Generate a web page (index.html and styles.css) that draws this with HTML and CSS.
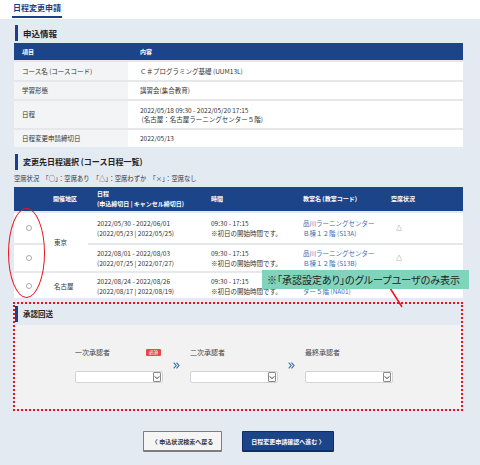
FILE: index.html
```html
<!DOCTYPE html>
<html lang="ja">
<head>
<meta charset="utf-8">
<title>日程変更申請</title>
<link rel="stylesheet" href="styles.css">
</head>
<body>
<div class="tabbar"><span class="tab">日程変更申請</span></div>
<div class="main">
  <h2 class="sec">申込情報</h2>
  <div class="info">
    <div class="irow ihead"><div class="lbl">項目</div><div class="val">内容</div></div>
    <div class="irow h20"><div class="lbl">コース名 (コースコード)</div><div class="val">Ｃ＃プログラミング基礎 (UUM13L)</div></div>
    <div class="irow h19"><div class="lbl">学習形態</div><div class="val">講習会(集合教育)</div></div>
    <div class="irow h28"><div class="lbl">日程</div><div class="val">2022/05/18 09:30 - 2022/05/20 17:15<br>&nbsp;(名古屋：名古屋ラーニングセンター５階)</div></div>
    <div class="irow h19"><div class="lbl">日程変更申請締切日</div><div class="val">2022/05/13</div></div>
  </div>

  <h2 class="sec sec2">変更先日程選択 (コース日程一覧)</h2>
  <p class="legend">空席状況　「○」：空席あり　「△」：空席わずか　「×」：空席なし</p>
  <div class="sched">
    <div class="th"></div>
    <div class="th">開催地区</div>
    <div class="th">日程<br>(申込締切日 | キャンセル締切日)</div>
    <div class="th">時間</div>
    <div class="th">教室名 (教室コード)</div>
    <div class="th">空席状況</div>

    <div class="td rad"><span class="radio"></span></div>
    <div class="td area span2">東京</div>
    <div class="td">2022/05/30 - 2022/06/01<br>(2022/05/23 | 2022/05/25)</div>
    <div class="td">09:30 - 17:15<br>※初日の開始時間です。</div>
    <div class="td link">品川ラーニングセンター<br>Ｂ棟１２階 (S13A)</div>
    <div class="td st">△</div>

    <div class="td rad"><span class="radio"></span></div>
    <div class="td">2022/08/01 - 2022/08/03<br>(2022/07/25 | 2022/07/27)</div>
    <div class="td">09:30 - 17:15<br>※初日の開始時間です。</div>
    <div class="td link">品川ラーニングセンター<br>Ｂ棟１２階 (S13B)</div>
    <div class="td st">△</div>

    <div class="td rad"><span class="radio"></span></div>
    <div class="td area">名古屋</div>
    <div class="td">2022/08/24 - 2022/08/26<br>(2022/08/17 | 2022/08/19)</div>
    <div class="td">09:30 - 17:15<br>※初日の開始時間です。</div>
    <div class="td link">名古屋ラーニングセン<br>ター５階 (NA01)</div>
    <div class="td st">○</div>
  </div>

  <div class="approval">
    <div class="ap-head"><span class="ap-title">承認回送</span></div>
    <div class="ap-body">
      <div class="ap-col">
        <div class="ap-label">一次承認者<span class="req">必須</span></div>
        <div class="sel"><i><svg viewBox="0 0 8 6" width="6" height="5"><path d="M1 1.5 L4 4.5 L7 1.5" fill="none" stroke="#333" stroke-width="1.3"/></svg></i></div>
      </div>
      <div class="arrow"><svg viewBox="0 0 8 8" width="7" height="7"><path d="M0.8 0.8 L3.6 4 L0.8 7.2 M4 0.8 L6.8 4 L4 7.2" fill="none" stroke="#3a6db3" stroke-width="1.3"/></svg></div>
      <div class="ap-col">
        <div class="ap-label">二次承認者</div>
        <div class="sel"><i><svg viewBox="0 0 8 6" width="6" height="5"><path d="M1 1.5 L4 4.5 L7 1.5" fill="none" stroke="#333" stroke-width="1.3"/></svg></i></div>
      </div>
      <div class="arrow"><svg viewBox="0 0 8 8" width="7" height="7"><path d="M0.8 0.8 L3.6 4 L0.8 7.2 M4 0.8 L6.8 4 L4 7.2" fill="none" stroke="#3a6db3" stroke-width="1.3"/></svg></div>
      <div class="ap-col">
        <div class="ap-label">最終承認者</div>
        <div class="sel"><i><svg viewBox="0 0 8 6" width="6" height="5"><path d="M1 1.5 L4 4.5 L7 1.5" fill="none" stroke="#333" stroke-width="1.3"/></svg></i></div>
      </div>
    </div>
  </div>

  <div class="btns">
    <button class="btn back">〈 申込状況検索へ戻る</button>
    <button class="btn next">日程変更申請確認へ進む 〉</button>
  </div>
</div>

<div class="ellipse"></div>
<svg class="pointer" width="20" height="22" viewBox="0 0 20 22"><line x1="4" y1="1" x2="16" y2="20" stroke="#e8141c" stroke-width="1.5"/></svg>
<div class="note">※「承認設定あり」のグループユーザのみ表示</div>
</body>
</html>
```

FILE: styles.css
```css
* { box-sizing: border-box; }
html, body { margin: 0; padding: 0; }
body {
  font-family: "Noto Sans CJK JP", "Noto Sans", sans-serif;
  font-size: 6.5px;
  color: #333;
  background: #e3eaf2;
  position: relative;
  width: 480px;
  height: 465px;
  overflow: hidden;
}
.tabbar {
  background: #fff;
  height: 19px;
  padding-left: 12px;
}
.tab {
  display: inline-block;
  font-size: 8px;
  font-weight: bold;
  color: #1b3f8a;
  line-height: 16px;
  height: 18px;
  padding: 0 1px;
  border-bottom: 2px solid #1b3f8a;
}
.main {
  padding: 6px 17px 0 14px;
}
.sec {
  margin: 0 0 2px 1px;
  font-size: 8.5px;
  font-weight: bold;
  color: #222;
  border-left: 3px solid #1b3f8a;
  padding-left: 5px;
  line-height: 16px;
  height: 16px;
}
.sec2 { margin-top: 7px; margin-bottom: 0; font-size: 8px; }

.info { background: #fff; }
.irow {
  display: grid;
  grid-template-columns: 114px 1fr;
}
.irow > div {
  display: flex;
  align-items: center;
  line-height: 9px;
}
.irow .lbl { background: #f3f4f6; padding-left: 8px; }
.irow .val { padding-left: 12px; }
.irow:not(.ihead) > div { border-top: 2px solid #e5e7eb; }
.ihead { height: 17px; background: #1c4589; }
.ihead > div { color: #fff; font-weight: bold; font-size: 6px; }
.ihead .lbl { background: transparent; }
.h20 { height: 20px; }
.h19 { height: 19px; }
.h28 { height: 29px; }

.legend {
  margin: 4px 0 3px 0;
  line-height: 10px;
  font-size: 6.3px;
}

.sched {
  display: grid;
  grid-template-columns: 30px 44px 114px 92px 88px 1fr;
  grid-template-rows: 24px 32px 28px 27px;
  background: #fff;
}
.sched > div {
  display: flex;
  align-items: center;
  line-height: 10px;
  padding-left: 9px;
}
.sched .th {
  background: #1c4589;
  color: #fff;
  font-weight: bold;
  font-size: 6px;
  line-height: 10px;
}
.sched .td { border-top: 2px solid #e5e8ec; }
.sched .span2 { grid-row: span 2; }
.sched .rad { padding-left: 0; justify-content: center; }
.radio {
  display: block;
  width: 6px;
  height: 6px;
  border: 1px solid #a9a9a9;
  border-radius: 50%;
  background: #fff;
}
.sched .area { padding-left: 10px; }
.sched .link { color: #3a6db3; }
.sched .st { padding-left: 14px; font-size: 6px; color: #555; }

.approval {
  margin: 4px 0 0 -1px;
  border: 2px dotted #e8141c;
}
.ap-head {
  background: #e3eaf2;
  height: 21px;
  padding-top: 2px;
}
.ap-title {
  display: block;
  border-left: 3px solid #1b3f8a;
  padding-left: 5px;
  line-height: 16px;
  font-size: 7.5px;
  font-weight: bold;
  color: #222;
}
.ap-body {
  background: #f2f2f2;
  display: flex;
  padding: 21px 0 26px 60px;
}
.ap-col { width: 88px; }
.ap-label {
  display: flex;
  justify-content: space-between;
  align-items: center;
  height: 12px;
  margin-bottom: 13px;
  font-size: 7px;
  color: #444;
  padding-right: 2px;
}
.req {
  background: #e8474c;
  color: #fff;
  font-size: 4.5px;
  line-height: 7px;
  padding: 0 3px;
  border-radius: 1px;
}
.arrow {
  width: 27px;
  display: flex;
  justify-content: center;
  padding-top: 16px;
}
.sel {
  height: 12px;
  background: #fff;
  border: 1px solid #d3d3d3;
  border-radius: 2px;
  display: flex;
  justify-content: flex-end;
  align-items: center;
  padding-right: 1px;
}
.sel i {
  display: flex;
  align-items: center;
  justify-content: center;
  width: 8px;
  height: 10px;
  border: 1px solid #8a8a8a;
  border-radius: 1px;
  background: #fafafa;
}

.btns {
  display: flex;
  justify-content: center;
  gap: 20px;
  margin-top: 20px;
}
.btn {
  height: 21px;
  font-family: "Noto Sans CJK JP", "Noto Sans", sans-serif;
  font-size: 6px;
  font-weight: bold;
  padding: 0;
  cursor: pointer;
}
.back {
  width: 79px;
  background: #f5f5f5;
  color: #333;
  border: 1px solid #7d7d7d;
  border-bottom-width: 2px;
  border-radius: 1px;
}
.next {
  width: 92px;
  background: #1c4589;
  color: #fff;
  border: 1px solid #0f2d66;
  border-bottom-width: 2px;
  border-radius: 1px;
}

.ellipse {
  position: absolute;
  left: 8px;
  top: 208px;
  width: 37px;
  height: 90px;
  border: 1.5px solid #e8141c;
  border-radius: 50%;
}
.pointer {
  position: absolute;
  left: 386px;
  top: 287px;
}
.note {
  position: absolute;
  left: 262px;
  top: 270px;
  width: 207px;
  height: 19px;
  background: #7fd4bb;
  color: #222;
  font-size: 10px;
  line-height: 19px;
  padding-left: 5px;
  white-space: nowrap;
  font-feature-settings: "palt";
}
```
